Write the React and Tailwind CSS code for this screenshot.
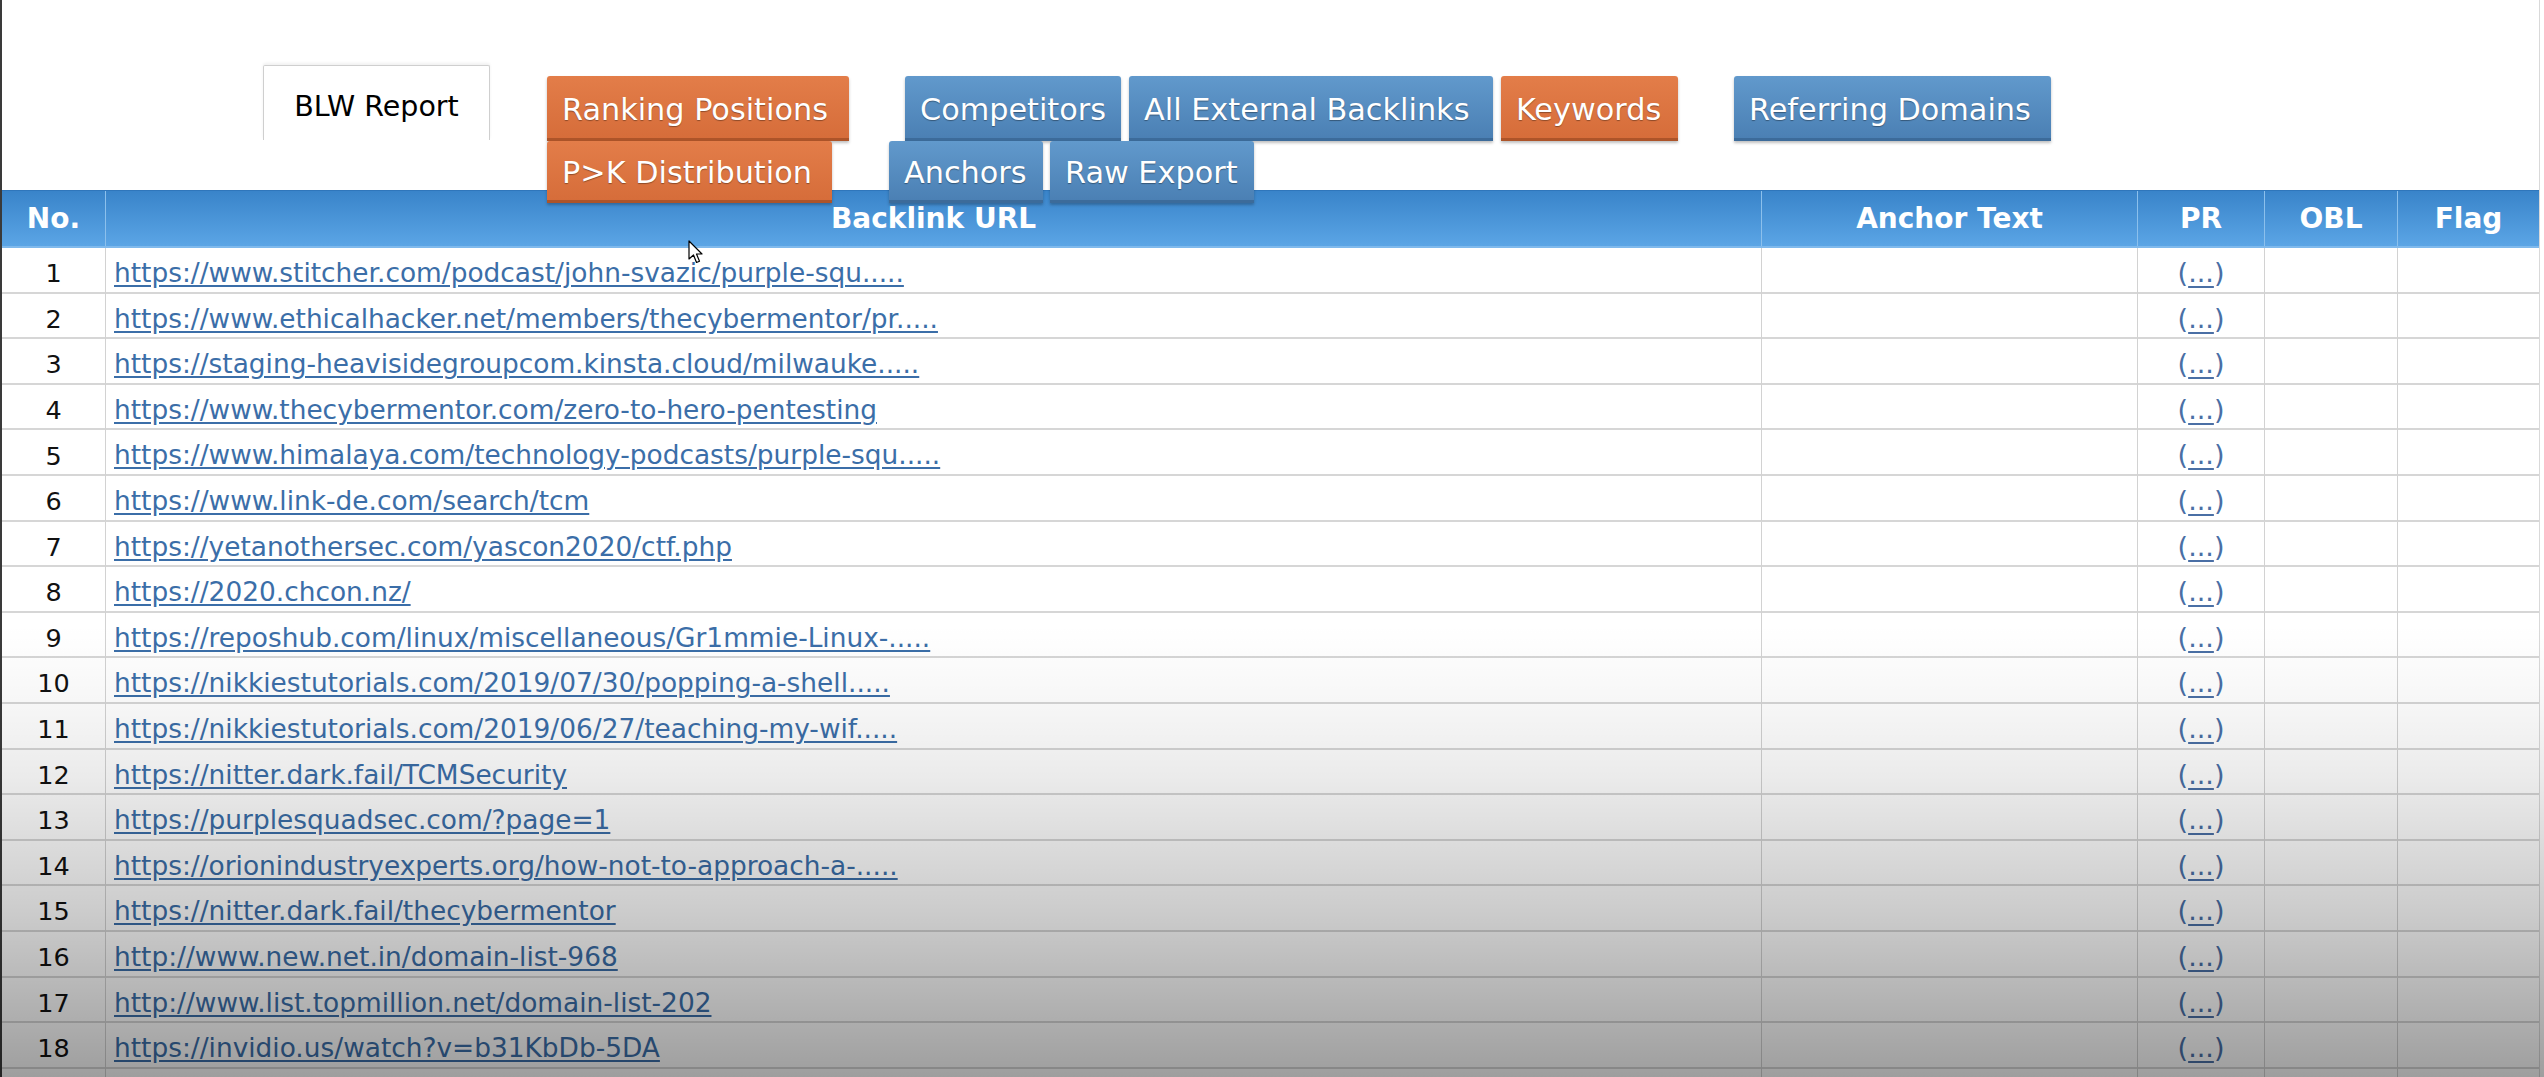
import React from 'react'

const links = [
  'https://www.stitcher.com/podcast/john-svazic/purple-squ.....',
  'https://www.ethicalhacker.net/members/thecybermentor/pr.....',
  'https://staging-heavisidegroupcom.kinsta.cloud/milwauke.....',
  'https://www.thecybermentor.com/zero-to-hero-pentesting',
  'https://www.himalaya.com/technology-podcasts/purple-squ.....',
  'https://www.link-de.com/search/tcm',
  'https://yetanothersec.com/yascon2020/ctf.php',
  'https://2020.chcon.nz/',
  'https://reposhub.com/linux/miscellaneous/Gr1mmie-Linux-.....',
  'https://nikkiestutorials.com/2019/07/30/popping-a-shell.....',
  'https://nikkiestutorials.com/2019/06/27/teaching-my-wif.....',
  'https://nitter.dark.fail/TCMSecurity',
  'https://purplesquadsec.com/?page=1',
  'https://orionindustryexperts.org/how-not-to-approach-a-.....',
  'https://nitter.dark.fail/thecybermentor',
  'http://www.new.net.in/domain-list-968',
  'http://www.list.topmillion.net/domain-list-202',
  'https://invidio.us/watch?v=b31KbDb-5DA',
]

const orange =
  'bg-[linear-gradient(to_bottom,#e37d49,#d66d3a)] border-b-[3px] border-[#ad5429]'
const blue =
  'bg-[linear-gradient(to_bottom,#6199cc,#4b80b4)] border-b-[3px] border-[#3c6b9a]'

function Btn({ children, color, w, className = '' }) {
  return (
    <button
      className={`${color} ${w} ${className} flex h-full shrink-0 items-center rounded-t-[3px] pl-[15px] pt-[6px] text-left text-[30.3px] leading-none text-white shadow-[0_2px_3px_rgba(0,0,0,0.25)] [text-shadow:0_1px_1px_rgba(0,0,0,0.35)]`}
    >
      {children}
    </button>
  )
}

const cell = 'flex items-center border-r border-[#d2d2d2] pt-[5px]'
const head = 'flex items-center justify-center border-r border-[#8cc0ec] text-[28px] font-bold text-white'

export default function App() {
  return (
    <div className="relative h-[1077px] w-full overflow-hidden bg-white font-['DejaVu_Sans',sans-serif]">
      <div className="h-full w-[2540px] border-l-2 border-r border-l-[#3a3a3a] border-r-[#d9d9d9]">
        {/* tabs + report buttons */}
        <div className="relative z-10 flex h-[190px] items-start">
          <div className="ml-[261px] mt-[65px] flex h-[75px] w-[227px] shrink-0 items-center justify-center rounded-t-[2px] border border-b-0 border-[#cfcfcf] pt-[8px] text-[28.5px] text-black shadow-[0_-2px_3px_rgba(0,0,0,0.06)]">
            BLW Report
          </div>
          <div className="ml-[57px] mt-[76px] flex shrink-0 flex-col">
            <div className="flex h-[65px] shrink-0">
              <Btn color={orange} w="w-[302px]">Ranking Positions</Btn>
              <Btn color={blue} w="w-[216px]" className="ml-[56px]">Competitors</Btn>
              <Btn color={blue} w="w-[364px]" className="ml-[8px]">All External Backlinks</Btn>
              <Btn color={orange} w="w-[177px]" className="ml-[8px]">Keywords</Btn>
              <Btn color={blue} w="w-[317px]" className="ml-[56px]">Referring Domains</Btn>
            </div>
            <div className="flex h-[62px] shrink-0">
              <Btn color={orange} w="w-[285px]">P&gt;K Distribution</Btn>
              <Btn color={blue} w="w-[154px]" className="ml-[57px]">Anchors</Btn>
              <Btn color={blue} w="w-[204px]" className="ml-[7px]">Raw Export</Btn>
            </div>
          </div>
        </div>

        {/* table */}
        <div className="grid grid-cols-[104px_1656px_376px_127px_133px_1fr]">
          <div className="col-span-6 grid h-[58px] grid-cols-subgrid border-t border-b-2 border-t-[#2f76bb] border-b-[#7fb9ec] bg-[linear-gradient(to_bottom,#3984ca,#5ba5e5)]">
            <div className={head}>No.</div>
            <div className={head}>Backlink URL</div>
            <div className={head}>Anchor Text</div>
            <div className={head}>PR</div>
            <div className={head}>OBL</div>
            <div className={`${head} border-r-0`}>Flag</div>
          </div>

          {links.map((url, i) => (
            <div
              key={i}
              className="col-span-6 grid h-[45.6px] grid-cols-subgrid border-b-2 border-[#d6d6d6]"
            >
              <div className={`${cell} justify-center text-[25.5px] text-[#111]`}>{i + 1}</div>
              <div className={`${cell} pl-[8px]`}>
                <a className="text-[26.4px] leading-none text-[#3b6ea8] underline underline-offset-[3px]">
                  {url}
                </a>
              </div>
              <div className={cell}></div>
              <div className={`${cell} justify-center text-[27px] text-[#4a6fa5]`}>
                (<span className="underline underline-offset-[4px]">...</span>)
              </div>
              <div className={cell}></div>
              <div className="flex items-center"></div>
            </div>
          ))}
          <div className="col-span-6 grid h-[45.6px] grid-cols-subgrid border-b-2 border-[#d6d6d6]">
            <div className={cell}></div>
            <div className={cell}></div>
            <div className={cell}></div>
            <div className={cell}></div>
            <div className={cell}></div>
            <div></div>
          </div>
        </div>
      </div>

      {/* video fade over the lower rows */}
      <div className="pointer-events-none absolute inset-0 bg-[linear-gradient(to_bottom,transparent_58%,rgba(0,0,0,0.03)_65%,rgba(0,0,0,0.08)_72%,rgba(0,0,0,0.2)_84.5%,rgba(0,0,0,0.38)_100%)]"></div>

      {/* mouse pointer */}
      <svg className="pointer-events-none absolute left-[688px] top-[240px]" width="16" height="25" viewBox="0 0 16 25">
        <path d="M1 1 L1 19 L5.5 15 L8.5 22.5 L11.5 21.2 L8.5 14 L14 14 Z" fill="#fff" stroke="#000" strokeWidth="1.2" strokeLinejoin="round" />
      </svg>
    </div>
  )
}
